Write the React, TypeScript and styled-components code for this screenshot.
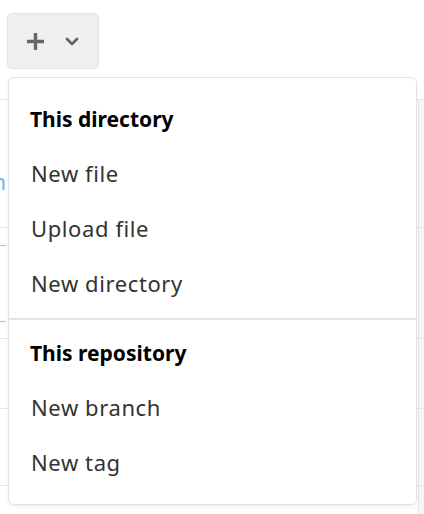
import React from 'react';
import styled, { createGlobalStyle } from 'styled-components';

const GlobalStyle = createGlobalStyle`
  html, body {
    margin: 0;
    padding: 0;
    background: #ffffff;
  }
  body {
    font-family: "Noto Sans", "Open Sans", sans-serif;
    color: #303030;
  }
`;

const Page = styled.div`
  position: relative;
  width: 424px;
  height: 514px;
  overflow: hidden;
`;

const Toolbar = styled.div`
  display: flex;
  padding: 13px 0 0 7px;
`;

const AddButton = styled.button`
  display: flex;
  align-items: center;
  gap: 21px;
  width: 92px;
  height: 56px;
  padding: 0 0 0 19px;
  background: #efefef;
  border: 1px solid #e3e3e3;
  border-radius: 5px;
  color: #666666;
  cursor: pointer;
`;

const FileList = styled.div`
  margin-top: 30px;
  border-top: 1px solid #e8e8e8;
`;

const FileRow = styled.div<{ $height: number }>`
  display: grid;
  grid-template-columns: 6px 1fr 6px;
  height: ${({ $height }) => $height}px;
  border-bottom: 1px solid #e8e8e8;
`;

const LinkCell = styled.div`
  display: flex;
  justify-content: flex-end;
  align-items: flex-start;
  padding-top: 66px;
  white-space: nowrap;
  font-size: 22px;
  color: #6fb2e8;
`;

const DashCell = styled.div`
  display: flex;
  flex-direction: column;
  justify-content: space-between;
  padding: 17px 0 15px;
`;

const Dash = styled.div`
  height: 1px;
  border-top: 1px dashed #bdbdbd;
`;

const SideCell = styled.div`
  background: #f6f6f6;
  border-left: 1px solid #e6e6e6;
`;

const Menu = styled.div`
  position: absolute;
  left: 8px;
  top: 77px;
  width: 409px;
  box-sizing: border-box;
  padding: 8px 0 13px;
  background: #ffffff;
  border: 1px solid #e1e1e1;
  border-radius: 6px;
  box-shadow: 0 2px 4px rgba(0, 0, 0, 0.06);
`;

const SectionTitle = styled.div`
  padding: 21px 21px 16px;
  line-height: 24px;
  font-size: 21px;
  font-weight: 700;
  color: #000000;
`;

const MenuItem = styled.a`
  display: flex;
  align-items: center;
  box-sizing: border-box;
  height: 55px;
  padding: 0 22px 3px;
  font-size: 22px;
  letter-spacing: 0.6px;
  color: #333333;
  text-decoration: none;
  cursor: pointer;
`;

const Divider = styled.div`
  height: 2px;
  margin-top: 6px;
  background: #e3e3e3;
`;

const PlusIcon = () => (
  <svg width="17" height="17" viewBox="0 0 17 17" fill="none">
    <path d="M8.5 1v15M1 8.5h15" stroke="currentColor" strokeWidth="3.4" strokeLinecap="round" />
  </svg>
);

const ChevronIcon = () => (
  <svg width="14" height="9" viewBox="0 0 14 9" fill="none">
    <path d="M2 2l5 5 5-5" stroke="currentColor" strokeWidth="2.8" strokeLinecap="round" strokeLinejoin="round" />
  </svg>
);

const sections = [
  { title: 'This directory', items: ['New file', 'Upload file', 'New directory'] },
  { title: 'This repository', items: ['New branch', 'New tag'] },
];

export default function App() {
  return (
    <Page>
      <GlobalStyle />
      <Toolbar>
        <AddButton type="button" aria-label="Add">
          <PlusIcon />
          <ChevronIcon />
        </AddButton>
      </Toolbar>

      <FileList>
        <FileRow $height={127}>
          <LinkCell>Open in main</LinkCell>
          <div />
          <SideCell />
        </FileRow>
        <FileRow $height={110}>
          <DashCell>
            <Dash />
            <Dash />
          </DashCell>
          <div />
          <SideCell />
        </FileRow>
        <FileRow $height={69}>
          <div />
          <div />
          <SideCell />
        </FileRow>
        <FileRow $height={76}>
          <div />
          <div />
          <SideCell />
        </FileRow>
        <FileRow $height={60}>
          <div />
          <div />
          <SideCell />
        </FileRow>
      </FileList>

      <Menu>
        {sections.map((section, i) => (
          <React.Fragment key={section.title}>
            {i > 0 && <Divider />}
            <SectionTitle>{section.title}</SectionTitle>
            {section.items.map((item) => (
              <MenuItem key={item}>{item}</MenuItem>
            ))}
          </React.Fragment>
        ))}
      </Menu>
    </Page>
  );
}
